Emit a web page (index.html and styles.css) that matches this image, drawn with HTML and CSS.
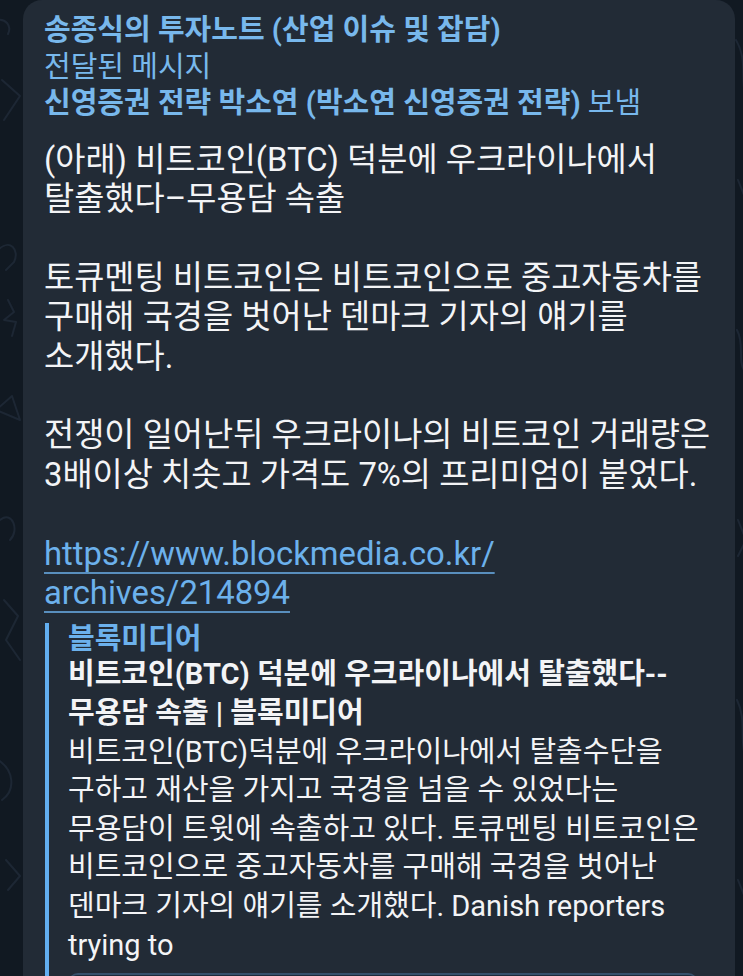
FILE: index.html
```html
<!DOCTYPE html>
<html lang="ko">
<head>
<meta charset="utf-8">
<title>Telegram message</title>
<link rel="stylesheet" href="styles.css">
</head>
<body>
<div class="screen">
  <svg class="pattern" width="743" height="976" viewBox="0 0 743 976" aria-hidden="true">
    <g fill="none" stroke="#1d2734" stroke-width="2" stroke-linecap="round" stroke-linejoin="round">
      <path d="M-4 20 C6 18 12 26 8 34"/>
      <path d="M2 80 L20 96 L4 120"/>
      <path d="M-2 250 C10 238 20 250 14 262 L6 270"/>
      <path d="M8 300 L14 312 L4 320 L16 322 L12 336"/>
      <path d="M-4 410 L12 396 L20 420 Z"/>
      <path d="M0 520 C12 510 20 530 10 540"/>
      <path d="M4 600 L18 616 L6 640 L20 660"/>
      <path d="M-2 760 C14 770 16 790 2 800"/>
      <path d="M6 860 L20 876 L8 890"/>
      <path d="M736 40 C748 60 740 80 746 100"/>
      <path d="M738 180 L746 200"/>
      <path d="M737 330 C745 345 737 360 745 372"/>
      <path d="M738 520 L746 540 L738 556"/>
      <path d="M737 700 C747 720 739 740 746 760"/>
      <path d="M738 880 L746 900"/>
    </g>
  </svg>
  <div class="bubble">
    <div class="fwd">
      <div class="channel">송종식의 투자노트 (산업 이슈 및 잡담)</div>
      <div class="fwd-label">전달된 메시지</div>
      <div class="fwd-from"><span class="strong">신영증권 전략 박소연 (박소연 신영증권 전략)</span> 보냄</div>
    </div>
    <div class="text">(아래) 비트코인(BTC) 덕분에 우크라이나에서<br>탈출했다–무용담 속출<br><br>토큐멘팅 비트코인은 비트코인으로 중고자동차를<br>구매해 국경을 벗어난 덴마크 기자의 얘기를<br>소개했다.<br><br>전쟁이 일어난뒤 우크라이나의 비트코인 거래량은<br>3배이상 치솟고 가격도 7%의 프리미엄이 붙었다.<br><br><a class="link" href="#">https://www.blockmedia.co.kr/<br>archives/214894</a></div>
    <div class="preview">
      <div class="site">블록미디어</div>
      <div class="p-title">비트코인(BTC) 덕분에 우크라이나에서 탈출했다--<br>무용담 속출 | 블록미디어</div>
      <div class="p-desc">비트코인(BTC)덕분에 우크라이나에서 탈출수단을<br>구하고 재산을 가지고 국경을 넘을 수 있었다는<br>무용담이 트윗에 속출하고 있다. 토큐멘팅 비트코인은<br>비트코인으로 중고자동차를 구매해 국경을 벗어난<br>덴마크 기자의 얘기를 소개했다. Danish reporters<br>trying to</div>
      <div class="p-image"></div>
    </div>
  </div>
</div>
</body>
</html>
```

FILE: styles.css
```css
html, body {
  margin: 0;
  padding: 0;
}

body {
  background: #111922;
  font-family: "Roboto", "Noto Sans CJK KR", sans-serif;
}

.screen {
  position: relative;
  width: 743px;
  height: 976px;
  overflow: hidden;
}

.pattern {
  position: absolute;
  left: 0;
  top: 0;
}

.bubble {
  position: relative;
  margin-left: 23px;
  width: 712px;
  min-height: 976px;
  box-sizing: border-box;
  background: #222b36;
  border-radius: 19px 19px 0 0;
  padding: 12px 8px 0 21px;
  color: #f3f4f6;
}

.fwd {
  font-size: 29px;
  line-height: 36.5px;
  color: #78b8ec;
  white-space: nowrap;
}

.channel,
.strong {
  font-weight: 700;
}

.text {
  margin-top: 19px;
  font-size: 32.8px;
  line-height: 39.4px;
  white-space: nowrap;
}

.link {
  color: #6cb1ec;
  text-decoration: underline;
  text-decoration-color: rgba(108, 177, 236, 0.75);
  text-decoration-thickness: 1.5px;
  text-underline-offset: 7px;
}

.preview {
  margin-top: 10px;
  margin-left: 1px;
  border-left: 4px solid #62aef0;
  padding-left: 19px;
  font-size: 29px;
  white-space: nowrap;
}

.site {
  color: #6cb1ec;
  font-weight: 700;
  line-height: 32px;
}

.p-title {
  font-weight: 700;
  line-height: 38.6px;
}

.p-desc {
  line-height: 38.6px;
}

.p-image {
  margin-top: 9px;
  width: 630px;
  height: 40px;
  border-radius: 10px 10px 0 0;
  background: #1c2a3a;
  border-top: 2px solid #35506b;
}
```
